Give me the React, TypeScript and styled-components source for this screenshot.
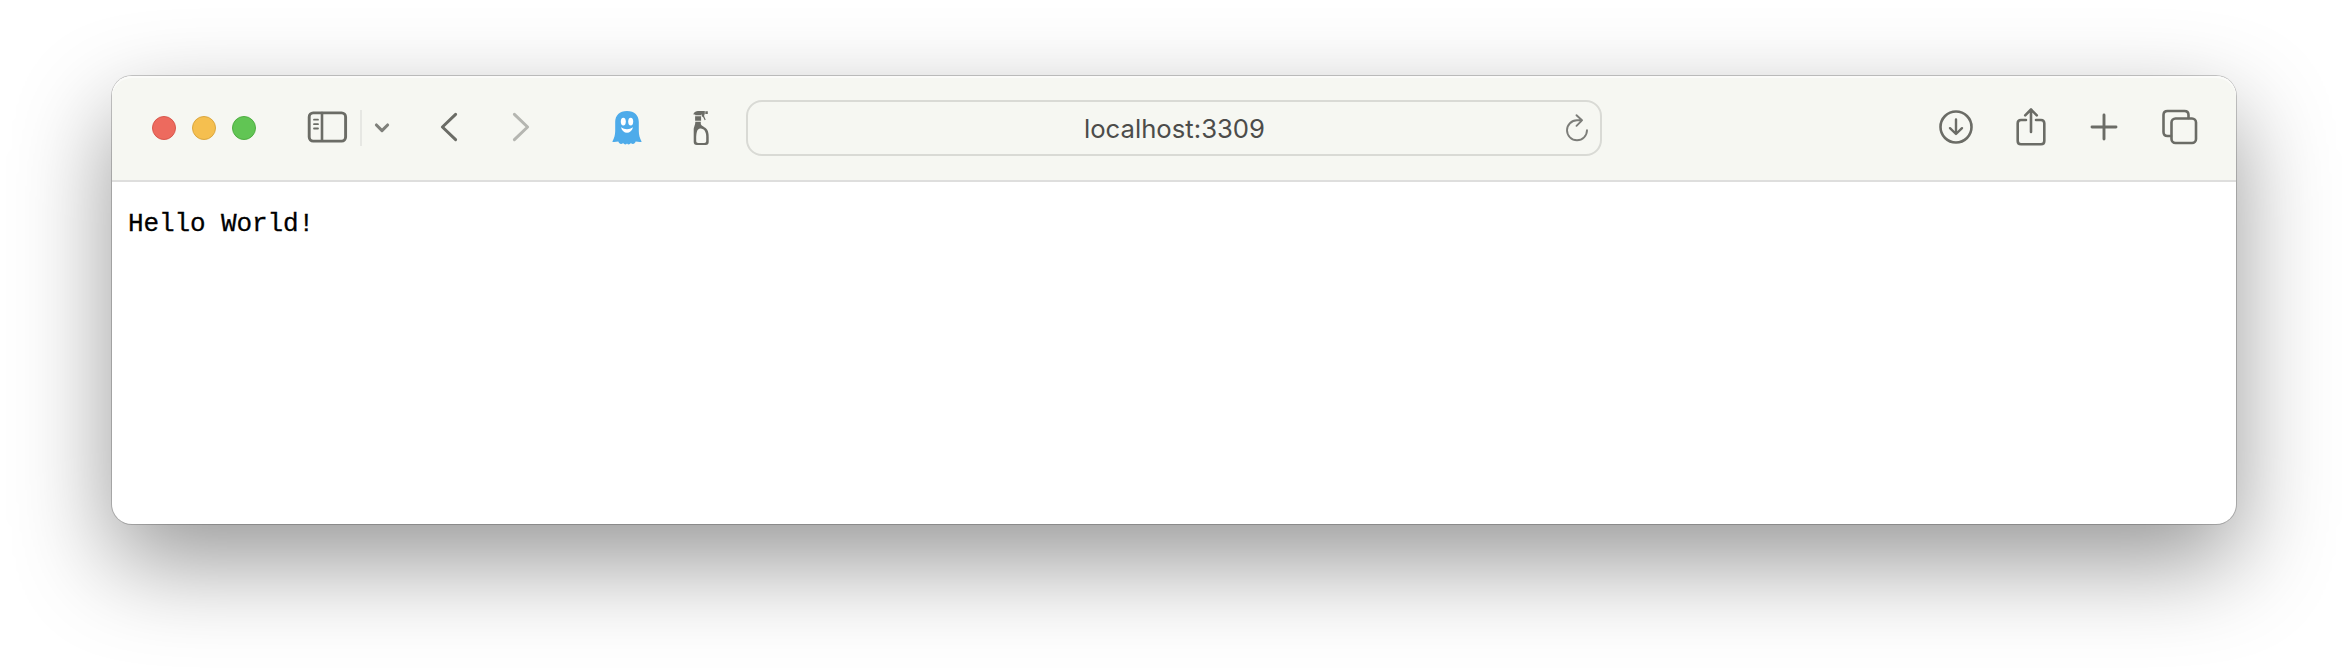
import React from "react";
import styled, { createGlobalStyle } from "styled-components";

const GlobalStyle = createGlobalStyle`
  *, *::before, *::after { box-sizing: border-box; }
  html, body { margin: 0; background: #fff; }
  body { overflow: hidden; }
`;

const Desktop = styled.main`
  height: 672px;
  padding: 76px 112px 148px;
  overflow: hidden;
  background: #fff;
`;

const BrowserWindow = styled.section`
  display: flex;
  flex-direction: column;
  height: 448px;
  border-radius: 20px;
  background: #fff;
  box-shadow: 0 0 0 1px rgba(0, 0, 0, 0.2), 0 38px 96px rgba(0, 0, 0, 0.41);
`;

const Toolbar = styled.header`
  display: flex;
  align-items: center;
  flex: none;
  height: 106px;
  padding: 0 37px 0 40px;
  border-bottom: 2px solid #dededd;
  border-radius: 20px 20px 0 0;
  background: #f6f7f2;
  box-shadow: inset 0 2px 0 #fbfbf9;
  color: #6b6c66;
`;

const TrafficLights = styled.div`
  display: flex;
  gap: 16px;
`;

const Light = styled.span<{ $fill: string; $edge: string }>`
  width: 24px;
  height: 24px;
  border: 1px solid ${(p) => p.$edge};
  border-radius: 50%;
  background: ${(p) => p.$fill};
`;

const SidebarGroup = styled.div`
  display: flex;
  align-items: center;
  margin-left: 50px;
`;

const Divider = styled.span`
  width: 2px;
  height: 36px;
  margin: 0 12px;
  background: #e6e7e3;
`;

const IconButton = styled.button<{ $gap?: number; $lift?: number; $dim?: boolean }>`
  display: flex;
  flex: none;
  margin: 0 0 ${(p) => p.$lift ?? 0}px ${(p) => p.$gap ?? 0}px;
  padding: 0;
  border: 0;
  background: none;
  color: ${(p) => (p.$dim ? "#b5b6b1" : "inherit")};
`;

const Icon = styled.svg`
  display: block;
  fill: none;
  stroke: currentColor;
  stroke-width: 2.6;
  stroke-linecap: round;
  stroke-linejoin: round;
`;

const AddressBar = styled.div`
  display: flex;
  align-items: center;
  width: 856px;
  height: 56px;
  margin-left: 36px;
  padding: 0 11px 0 36px;
  border: 2px solid #d9dad5;
  border-radius: 16px;
  color: #7c7d79;
`;

const Url = styled.span`
  flex: 1;
  padding-top: 1px;
  text-align: center;
  color: #4c4c4a;
  font: 400 25.7px/32px Inter, "Liberation Sans", sans-serif;
`;

const Actions = styled.div`
  display: flex;
  align-items: center;
  margin-left: auto;
`;

const Page = styled.div`
  flex: 1;
  padding: 26px 16px;
`;

const Output = styled.pre`
  margin: 0;
  color: #000;
  font: 400 26px/32px "Courier New", "Liberation Mono", monospace;
  letter-spacing: -0.1px;
  -webkit-text-stroke: 0.3px #000;
`;

export default function App() {
  return (
    <Desktop>
      <GlobalStyle />
      <BrowserWindow>
        <Toolbar>
          <TrafficLights>
            <Light $fill="#ed6a5e" $edge="#d8584d" />
            <Light $fill="#f5bf4f" $edge="#dba73f" />
            <Light $fill="#61c554" $edge="#4fae42" />
          </TrafficLights>

          <SidebarGroup>
            <IconButton $lift={2} aria-label="Sidebar">
              <Icon width="42" height="32" viewBox="0 0 42 32">
                <rect x="3.2" y="1.9" width="36.4" height="28.2" rx="4" strokeWidth="2.9" />
                <path d="M16 2v27.500" strokeWidth="2.6" />
                <path d="M8 8.700h4M8 13.200h4M8 17.500h4" strokeWidth="1.8" />
              </Icon>
            </IconButton>
            <Divider />
            <IconButton aria-label="Tab groups">
              <Icon width="16" height="12" viewBox="0 0 16 12">
                <path d="M2.400 3l5.600 5.600L13.600 3" stroke="#7f807b" strokeWidth="3.1" />
              </Icon>
            </IconButton>
          </SidebarGroup>

          <IconButton $gap={50} $lift={2} aria-label="Back">
            <Icon width="18" height="30" viewBox="0 0 18 30">
              <path d="M15.600 2.400L2.400 15l13.200 12.600" strokeWidth="3" />
            </Icon>
          </IconButton>
          <IconButton $gap={54} $lift={2} $dim aria-label="Forward">
            <Icon width="18" height="30" viewBox="0 0 18 30">
              <path d="M2.400 2.400L15.600 15 2.400 27.600" strokeWidth="3" />
            </Icon>
          </IconButton>

          <IconButton $gap={82} aria-label="Tracker blocker">
            <Icon width="30" height="34" viewBox="0 0 30 34">
              <path
                d="M15 0C7.500 0 3.200 4.500 3.200 11V20C3.200 24 2.300 27 .3 30.700 2 31.500 4.500 30.700 6.300 30.500 7.200 33 9.200 33.800 11.200 32 12.500 34 14 33.500 15 32.500 16 33.500 17.500 34 18.800 32 20.800 33.800 22.800 33 23.700 30.500 25.500 30.700 28 31.500 29.700 30.700 27.700 27 26.800 24 26.800 20V11C26.800 4.500 22.500 0 15 0Z"
                fill="#4dabea"
                stroke="none"
              />
              <ellipse cx="11.300" cy="10.600" rx="2.500" ry="3.900" fill="#fff" stroke="none" />
              <ellipse cx="18.700" cy="10.600" rx="2.500" ry="3.900" fill="#fff" stroke="none" />
              <path d="M9 16.300c3.800 2.600 8.200 2.600 12 0-.9 3.600-3.200 5.500-6 5.500s-5.100-1.900-6-5.500Z" fill="#fff" stroke="none" />
            </Icon>
          </IconButton>
          <IconButton $gap={51} aria-label="Cleaner">
            <Icon width="17" height="34" viewBox="0 0 17 34">
              <g fill="currentColor" stroke="none">
                <path d="M.5 2.800C1.500.8 3 0 5 0h6.800v3.400H8.300v.8H2.200V3.400H.5ZM12.300.3h2.500v2.800h-2.500ZM8.800 3.300h2.400v2l1.500 3.500-1 .4-1.500-3-1.400-1ZM2.100 5.200h6v4.600h-6Z" />
                <path
                  fillRule="evenodd"
                  d="M2.300 10.700H7.800V13C8.500 15.500 12 15.600 14 18.500 15.300 20.500 15.700 23 15.700 26V31C15.700 33 14.700 34 12.700 34H3.700C1.700 34 .7 33 .7 31V19C.7 15.500 2.300 14.500 2.300 10.700ZM7.300 17.500C5.500 17.700 4.500 18.700 4 20.500 3.400 22.500 3.200 25 3.200 27V30C3.200 31.300 3.900 32 5.200 32H11.200C12.500 32 13.200 31.300 13.200 30V25C13.200 21 11 17.200 7.300 17.500Z"
                />
              </g>
            </Icon>
          </IconButton>

          <AddressBar>
            <Url>localhost:3309</Url>
            <IconButton aria-label="Reload">
              <Icon width="24" height="30" viewBox="0 0 24 30">
                <path d="M22 17.300A10 10 0 1 1 12 7.300h5M11.500 2.200L17 7.300l-5.500 5.500" strokeWidth="1.900" />
              </Icon>
            </IconButton>
          </AddressBar>

          <Actions>
            <IconButton $lift={2} aria-label="Downloads">
              <Icon width="36" height="36" viewBox="0 0 36 36">
                <circle cx="18" cy="18" r="15.500" />
                <path d="M18 10.500v14M12 19.200l6 5.800 6-5.800" strokeWidth="2.400" />
              </Icon>
            </IconButton>
            <IconButton $gap={41} $lift={3} aria-label="Share">
              <Icon width="32" height="40" viewBox="0 0 32 40">
                <path d="M11 13H6q-3.300 0-3.300 3.300v17.600Q2.700 37.200 6 37.200h20q3.300 0 3.300-3.300V16.300Q29.300 13 26 13h-5M16 25V3M10.200 8.300L16 2.500l5.800 5.800" />
              </Icon>
            </IconButton>
            <IconButton $gap={42} $lift={3} aria-label="New tab">
              <Icon width="30" height="30" viewBox="0 0 30 30">
                <path d="M15 3v24M3 15h24" strokeWidth="2.900" />
              </Icon>
            </IconButton>
            <IconButton $gap={42} $lift={3} aria-label="Show all tabs">
              <Icon width="38" height="38" viewBox="0 0 38 38">
                <rect x="10.500" y="10.500" width="24.500" height="24.500" rx="4" />
                <path d="M10 28H6.500q-4 0-4-4V7q0-4 4-4h17q4 0 4 4v3" />
              </Icon>
            </IconButton>
          </Actions>
        </Toolbar>
        <Page>
          <Output>Hello World!</Output>
        </Page>
      </BrowserWindow>
    </Desktop>
  );
}
